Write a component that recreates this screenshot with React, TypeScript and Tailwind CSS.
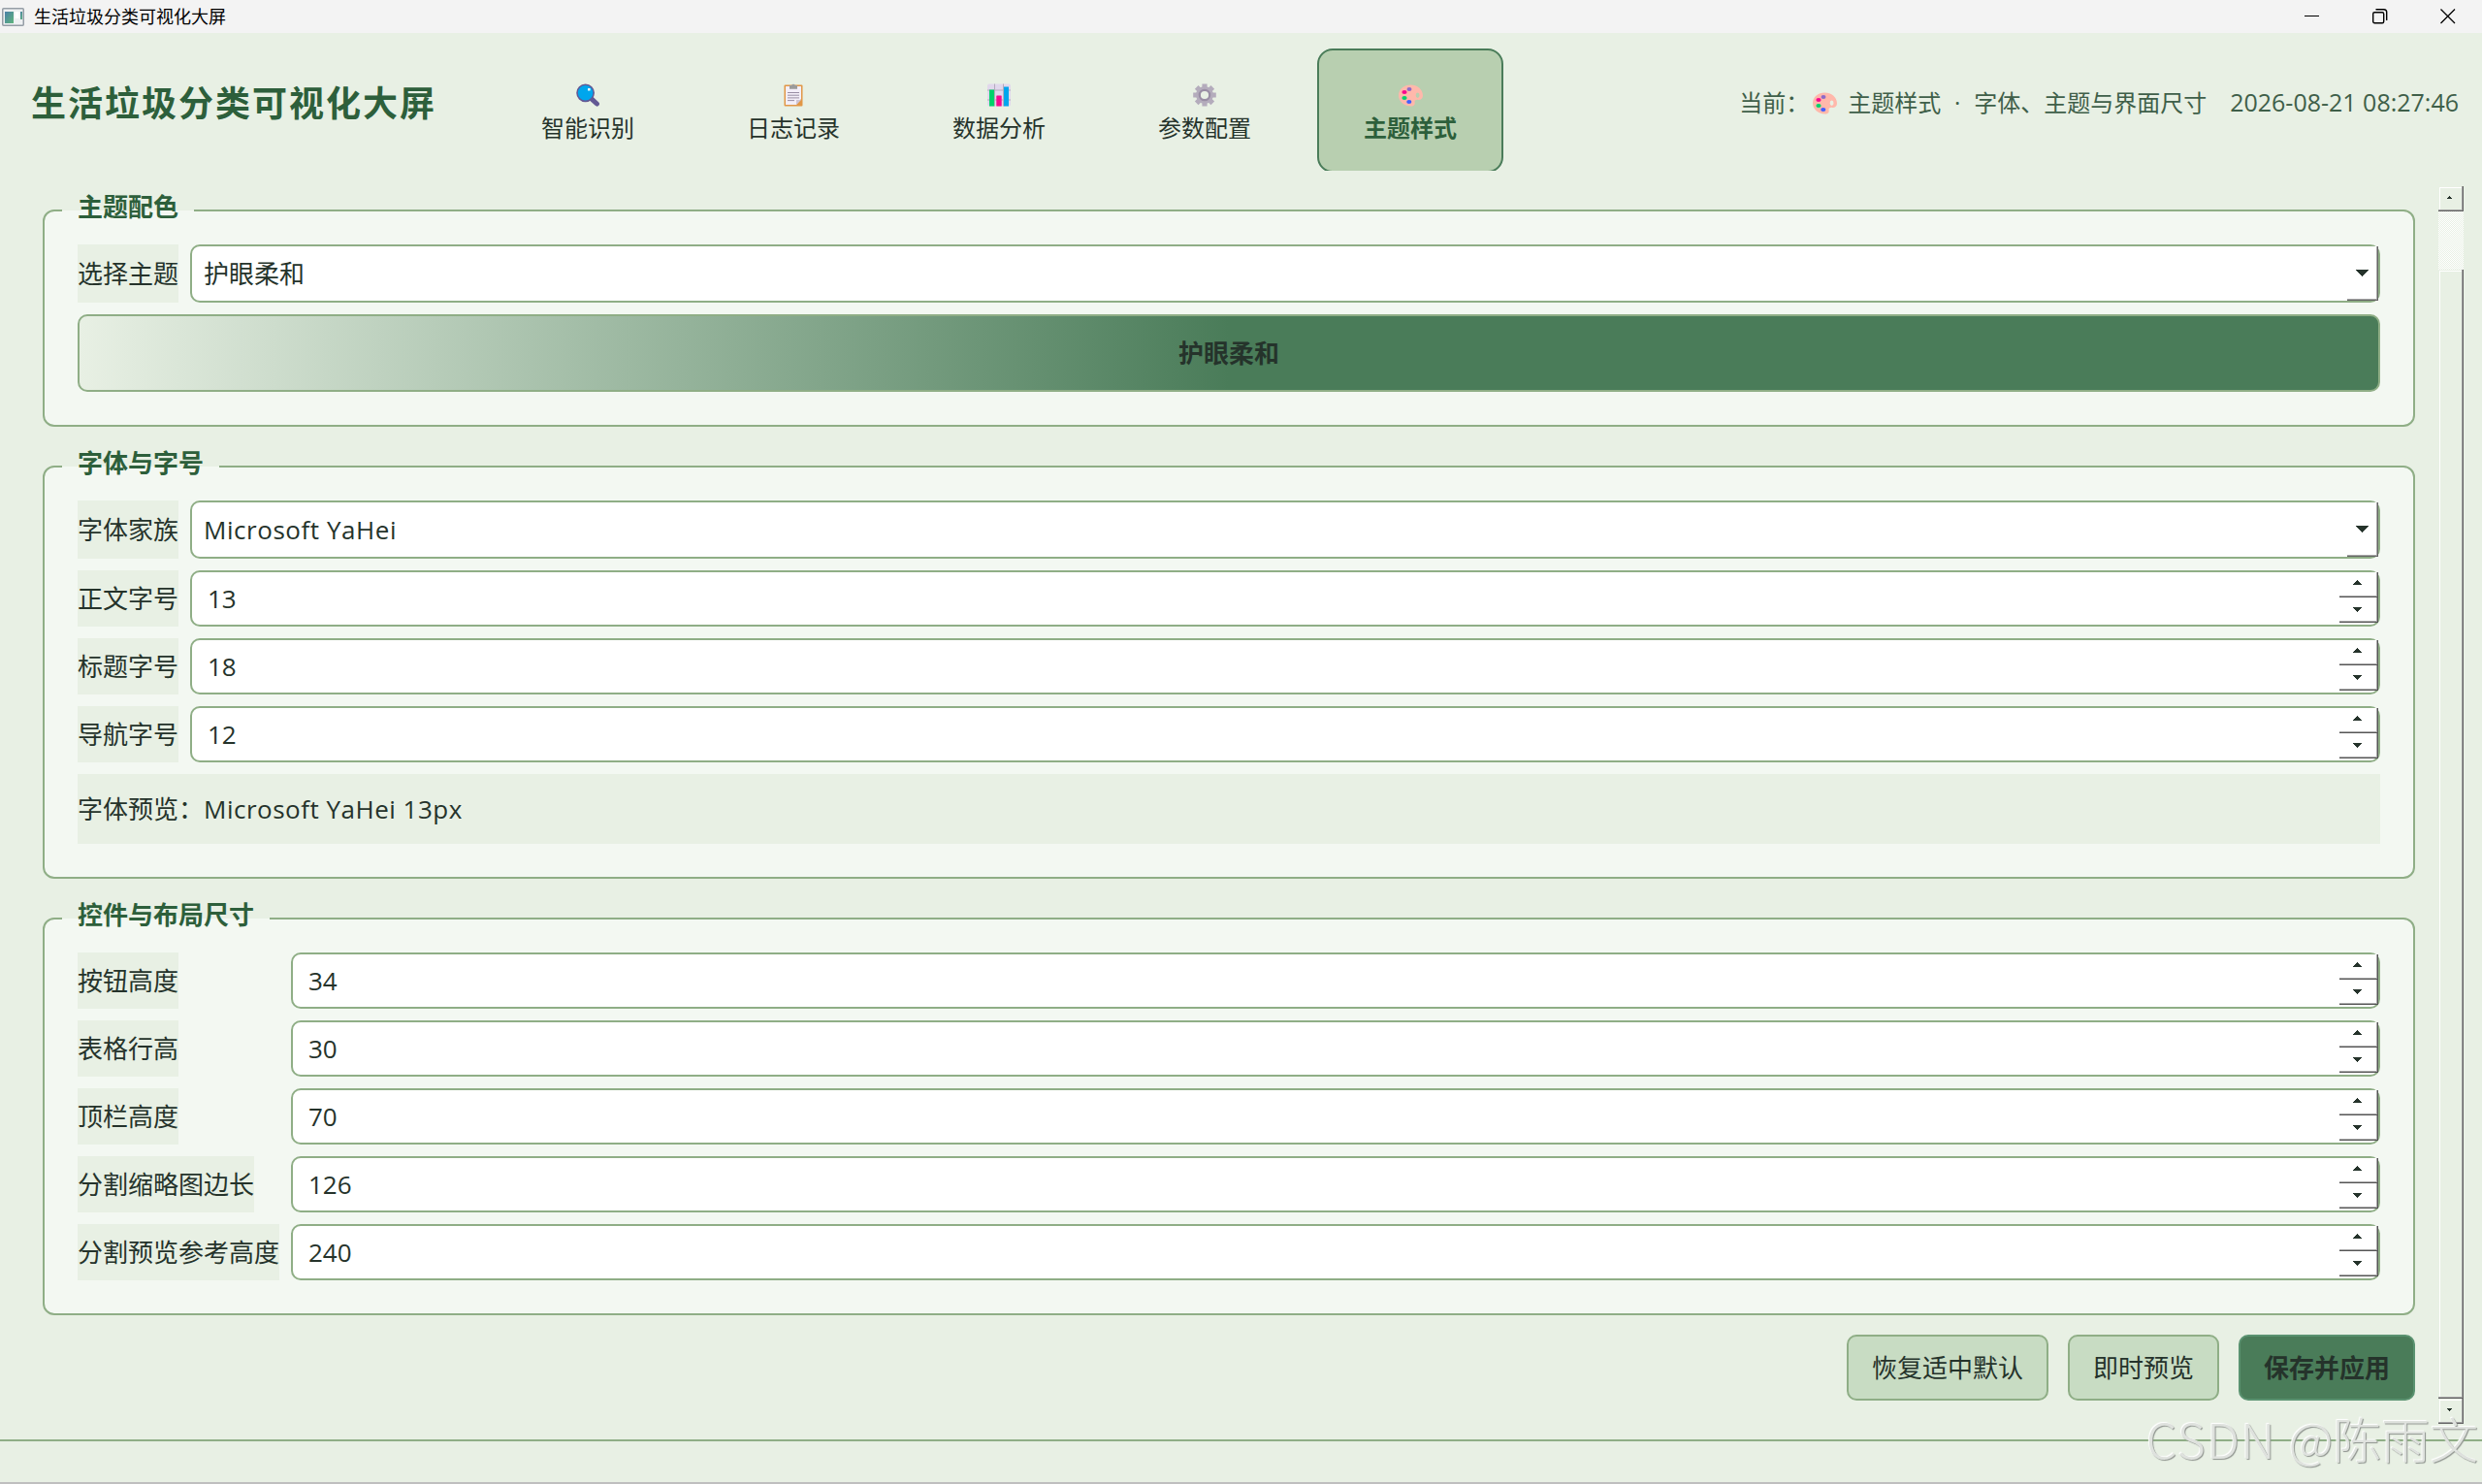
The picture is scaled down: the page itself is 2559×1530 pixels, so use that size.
import type { ReactNode } from "react";
import clsx from "clsx";

function SearchEmoji() {
  return (
    <svg width="24" height="24" viewBox="0 0 24 24">
      <path d="M15.8 15.8l5.6 5.2" stroke="#635994" strokeWidth="5" strokeLinecap="round" />
      <circle cx="9.6" cy="9.8" r="8.6" fill="#00a6ed" stroke="#635994" strokeWidth="1.6" />
      <rect x="12" y="5" width="2.6" height="2.6" rx="0.6" fill="#fff" />
    </svg>
  );
}

function ClipboardEmoji() {
  return (
    <svg width="24" height="24" viewBox="0 0 24 24">
      <rect x="2.5" y="1.5" width="19" height="22" rx="1" fill="#e19747" />
      <path d="M4 3h16v13l-5 6H4z" fill="#f3eef8" />
      <path d="M15 22v-5h5z" fill="#cdc4d6" />
      <path d="M8 2h2.2a2 2 0 0 1 3.6 0H16v3.8H8z" fill="#9b9b9b" />
      <path d="M6 9.5h12M6 12.2h12M6 14.9h12M6 17.6h7" stroke="#998ea4" strokeWidth="1" />
    </svg>
  );
}

function ChartEmoji() {
  return (
    <svg width="24" height="24" viewBox="0 0 24 24">
      <rect y="0.5" width="24" height="23" rx="2" fill="#e1d8ec" />
      <path d="M0 7h24M0 17h24M7.5 .5v23M16.5 .5v23" stroke="#b4acbc" strokeWidth="1" />
      <rect x="2" y="6.5" width="5" height="17" fill="#00d26a" />
      <rect x="9.3" y="12.5" width="5.4" height="11" rx="0.6" fill="#f8098e" />
      <rect x="17" y="3.5" width="5" height="20" fill="#00a6ed" />
    </svg>
  );
}

function GearEmoji() {
  return (
    <svg width="24" height="24" viewBox="0 0 24 24">
      <g stroke="#b4acbc" strokeWidth="5.2">
        <path d="M12 .5v6M12 17.5v6M.2 12h6M17.8 12h6M3.7 3.9l4.2 4.2M16.1 16.1l4.2 4.2M20.3 3.9l-4.2 4.2M7.9 16.1l-4.2 4.2" />
      </g>
      <circle cx="12" cy="12" r="7.2" fill="none" stroke="#b4acbc" strokeWidth="3.6" />
      <circle cx="12" cy="12" r="5.2" fill="none" stroke="#998ea4" strokeWidth="2.2" />
    </svg>
  );
}

function PaletteEmoji() {
  return (
    <svg width="25" height="24" viewBox="0 0 25 24">
      <path
        fillRule="evenodd"
        d="M12.5 1.5C19 1.5 25 6 25 12.5c0 3.2-2.2 4.6-4.8 4.4-2.6-.2-4 .6-3.6 2.6.4 2.2-.4 4-4.1 4C5.5 23.5 0 18.6 0 12.3S5.6 1.5 12.5 1.5zM19.6 9.5a1.9 2.7 0 1 0 0 5.4 1.9 2.7 0 1 0 0-5.400z"
        fill="#ffb8ab"
      />
      <ellipse cx="11" cy="6" rx="2.5" ry="2" fill="#8c6ac8" />
      <ellipse cx="6" cy="9" rx="2.6" ry="2" fill="#f8098e" />
      <ellipse cx="6" cy="15" rx="2.6" ry="2" fill="#00d26a" />
      <ellipse cx="10.8" cy="19" rx="2.6" ry="2" fill="#3f5fff" />
    </svg>
  );
}

function AppIcon() {
  return (
    <svg width="23" height="19" viewBox="0 0 23 19">
      <defs>
        <linearGradient id="app-pane" x1="0" y1="0" x2="1" y2="1">
          <stop offset="0" stopColor="#4a7fa8" />
          <stop offset="1" stopColor="#5fb57c" />
        </linearGradient>
      </defs>
      <rect x="0.75" y="0.75" width="21.5" height="17.5" rx="1" fill="#eef0f2" stroke="#959da6" strokeWidth="1.5" />
      <rect x="3" y="4" width="9" height="12" fill="url(#app-pane)" />
      <rect x="13.5" y="4" width="4" height="7" fill="#fff" />
      <rect x="19" y="4" width="2" height="8" fill="url(#app-pane)" />
    </svg>
  );
}

const NAV = [
  { label: "智能识别", icon: <SearchEmoji /> },
  { label: "日志记录", icon: <ClipboardEmoji /> },
  { label: "数据分析", icon: <ChartEmoji /> },
  { label: "参数配置", icon: <GearEmoji /> },
  { label: "主题样式", icon: <PaletteEmoji />, active: true },
];

const FONT_SIZES = [
  { label: "正文字号", value: 13 },
  { label: "标题字号", value: 18 },
  { label: "导航字号", value: 12 },
];

const SIZES = [
  { label: "按钮高度", value: 34 },
  { label: "表格行高", value: 30 },
  { label: "顶栏高度", value: 70 },
  { label: "分割缩略图边长", value: 126 },
  { label: "分割预览参考高度", value: 240 },
];

function TitleBar() {
  return (
    <div className="flex h-[34px] items-center bg-[#f3f3f3] pl-0.5 text-black">
      <AppIcon />
      <span className="ml-[10px] text-[18px] leading-[34px]">生活垃圾分类可视化大屏</span>
      <div className="ml-auto flex gap-[54px] pr-[27px]">
        <svg width="16" height="16" viewBox="0 0 16 16">
          <path d="M0 7.5h15" stroke="#000" />
        </svg>
        <svg width="16" height="16" viewBox="0 0 16 16" fill="none" stroke="#000" strokeWidth="1.4">
          <rect x="0.7" y="3.7" width="11" height="11" rx="1.5" />
          <path d="M3.5 .7h8.3a2.9 2.9 0 0 1 2.9 2.9v8.4" />
        </svg>
        <svg width="16" height="16" viewBox="0 0 16 16">
          <path d="M.5 .5l14.5 14.5M15 .5L.5 15" stroke="#000" strokeWidth="1.3" />
        </svg>
      </div>
    </div>
  );
}

function Header() {
  return (
    <header className="flex h-[158px] pt-4">
      <h1 className="ml-8 w-[478px] text-[36px] font-bold leading-[114px] tracking-[2px] text-[#2d5f3b]">
        生活垃圾分类可视化大屏
      </h1>
      <nav className="flex h-[126px] gap-5 overflow-hidden">
        {NAV.map(({ label, icon, active }) => (
          <button
            key={label}
            className={clsx(
              "flex h-32 w-48 flex-col items-center rounded-2xl border-2 pt-[34px] text-[24px] leading-[34px]",
              active ? "border-[#4a7c59] bg-[#b8cfb0] font-bold text-[#2d5f3b]" : "border-transparent"
            )}
          >
            <span className="h-[29px]">{icon}</span>
            {label}
          </button>
        ))}
      </nav>
      <div className="ml-auto flex h-28 items-center pr-6 text-[24px] text-[#3f5f49]">
        <span>当前：</span>
        <span className="ml-1 mr-[11px]">
          <PaletteEmoji />
        </span>
        <span>主题样式</span>
        <span className="w-[34px] text-center">·</span>
        <span>字体、主题与界面尺寸</span>
        <span className="ml-6 text-[25px]">2026-08-21 08:27:46</span>
      </div>
    </header>
  );
}

function Panel({ title, className, children }: { title: string; className?: string; children: ReactNode }) {
  return (
    <section
      className={clsx(
        "relative flex flex-col gap-3 rounded-xl border-2 border-[#8fae86] bg-[#f3f8f2] p-[34px]",
        className
      )}
    >
      <h2 className="absolute -top-[22px] left-[18px] bg-[linear-gradient(#e8f0e4_21px,#f3f8f2_21px)] px-4 text-[26px] font-bold leading-[34px] text-[#2d5f3b]">
        {title}
      </h2>
      {children}
    </section>
  );
}

function Row({ label, labelWidth, children }: { label: string; labelWidth: string; children: ReactNode }) {
  return (
    <div className="flex gap-3">
      <div className={clsx("flex", labelWidth)}>
        <span className="flex items-center whitespace-nowrap bg-[#e8f0e4]">{label}</span>
      </div>
      {children}
    </div>
  );
}

function UpArrow() {
  return (
    <svg width="9" height="5" viewBox="0 0 9 5" shapeRendering="crispEdges">
      <path d="M4 0h1v1h1v1h1v1h1v1h1v1H0V4h1V3h1V2h1V1h1z" fill="#25332b" />
    </svg>
  );
}

function DownArrow() {
  return (
    <svg width="9" height="5" viewBox="0 0 9 5" shapeRendering="crispEdges">
      <path d="M0 0h9v1H8v1H7v1H6v1H5v1H4V4H3V3H2V2H1V1H0z" fill="#25332b" />
    </svg>
  );
}

function ComboBox({ value, latin }: { value: string; latin?: boolean }) {
  return (
    <div className="flex h-[60px] flex-1 justify-between rounded-[10px] border-2 border-[#8fae86] bg-white pl-3">
      <span className={clsx("flex items-center", latin && "tracking-[0.55px]")}>{value}</span>
      <button className="flex w-8 border-b border-r border-[#646464] bg-white pl-[9px] pt-6 shadow-[inset_-1px_-1px_#a8a8a8]">
        <svg width="13" height="7" viewBox="0 0 13 7" shapeRendering="crispEdges">
          <path d="M0 0h13v1H12v1H11v1H10v1H9v1H8v1H7v1H6V6H5V5H4V4H3V3H2V2H1V1H0z" fill="#25332b" />
        </svg>
      </button>
    </div>
  );
}

function SpinBox({ value }: { value: number }) {
  return (
    <div className="flex h-[58px] flex-1 justify-between rounded-[10px] border-2 border-[#8fae86] bg-white pl-4">
      <span className="flex items-center">{value}</span>
      <div className="flex w-10 flex-col">
        <button className="flex h-[26px] border-b border-r border-[#555] bg-white pl-[14px] pt-2 shadow-[inset_-1px_-1px_#a8a8a8]">
          <UpArrow />
        </button>
        <button className="flex h-[26px] border-b border-r border-[#555] bg-white pl-[14px] pt-[10px] shadow-[inset_-1px_-1px_#a8a8a8]">
          <DownArrow />
        </button>
      </div>
    </div>
  );
}

const BEVEL =
  "border-b border-r border-[#646464] shadow-[inset_-1px_-1px_#a0a0a0,inset_1px_1px_#e8f0e4,inset_2px_2px_#fff] bg-[#e8f0e4]";

function ScrollBar() {
  return (
    <div className="flex w-[26px] flex-col">
      <div className={clsx("flex h-[26px] pl-[9px] pt-[10px]", BEVEL)}>
        <svg width="5" height="3" viewBox="0 0 5 3" shapeRendering="crispEdges">
          <path d="M2 0h1v1h1v1h1v1H0V2h1V1h1z" fill="#25332b" />
        </svg>
      </div>
      <div className="h-[60px] bg-[repeating-conic-gradient(#fff_0_25%,#e8f0e4_0_50%)] bg-[length:2px_2px]" />
      <div className={clsx("flex-1", BEVEL)} />
      <div className={clsx("flex h-[26px] pl-[9px] pt-[10px]", BEVEL)}>
        <svg width="5" height="3" viewBox="0 0 5 3" shapeRendering="crispEdges">
          <path d="M0 0h5v1H4v1H3v1H2V2H1V1H0z" fill="#25332b" />
        </svg>
      </div>
    </div>
  );
}

export default function App() {
  return (
    <div className="relative flex h-[1530px] w-[2559px] flex-col overflow-hidden bg-[#e8f0e4] font-['Open_Sans','Noto_Sans_CJK_SC',sans-serif] text-[26px] text-[#25332b]">
      <TitleBar />
      <Header />

      <div className="flex h-[1276px] pl-11 pr-[19px]">
        <main className="mr-6 flex w-[2446px] flex-col pt-6">
          <Panel title="主题配色">
            <Row label="选择主题" labelWidth="w-[104px]">
              <ComboBox value="护眼柔和" />
            </Row>
            <div className="flex h-20 items-center justify-center rounded-[10px] border-2 border-[#8fae86] bg-[linear-gradient(90deg,#e8f0e4,#4a7c59_50%)] font-bold">
              护眼柔和
            </div>
          </Panel>

          <Panel title="字体与字号" className="mt-10">
            <Row label="字体家族" labelWidth="w-[104px]">
              <ComboBox value="Microsoft YaHei" latin />
            </Row>
            {FONT_SIZES.map(({ label, value }) => (
              <Row key={label} label={label} labelWidth="w-[104px]">
                <SpinBox value={value} />
              </Row>
            ))}
            <div className="flex h-[72px] items-center bg-[#e8f0e4]">
              字体预览：<span className="tracking-[0.5px]">Microsoft YaHei 13px</span>
            </div>
          </Panel>

          <Panel title="控件与布局尺寸" className="mt-10">
            {SIZES.map(({ label, value }) => (
              <Row key={label} label={label} labelWidth="w-[208px]">
                <SpinBox value={value} />
              </Row>
            ))}
          </Panel>

          <div className="mt-5 flex justify-end gap-5">
            <button className="h-[68px] rounded-[10px] border-2 border-[#8fae86] bg-[#c8dcc3] px-6">恢复适中默认</button>
            <button className="h-[68px] rounded-[10px] border-2 border-[#8fae86] bg-[#c8dcc3] px-6">即时预览</button>
            <button className="h-[68px] rounded-[10px] border-2 border-[#5a9270] bg-[#4a7c59] px-6 font-bold">
              保存并应用
            </button>
          </div>
        </main>
        <ScrollBar />
      </div>

      <footer className="mt-4 flex-1 border-b-2 border-t-2 border-b-[#bfbfbf] border-t-[#8fae86]" />

      <div className="absolute left-[2213px] top-[1452px] whitespace-nowrap font-['Noto_Sans_CJK_SC',sans-serif] text-[50px] font-light leading-[60px] text-[#dfe2de] [text-shadow:1px_1px_1px_#8f948f,-1px_-1px_1px_#fff]">
        <span className="tracking-[1.5px]">CSDN </span>@陈雨文
      </div>
    </div>
  );
}
